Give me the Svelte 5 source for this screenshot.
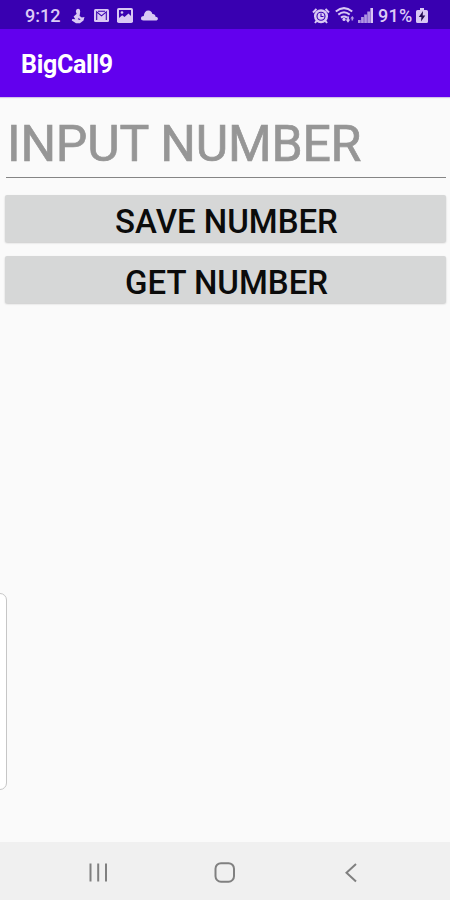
<script>
  let number = '';
  let saved = '';

  function saveNumber() {
    saved = number;
  }

  function getNumber() {
    number = saved;
  }
</script>

<div class="screen">
  <div class="status">
    <span class="clock">9:12</span>
    <svg class="touch" width="14" height="16" viewBox="0 0 14 16">
      <path d="M4.8 3Q5.5.6 7.3.7 9.4 1 9.2 3.5L8.6 8l2.2 1.5 2.7-.5-1 3.4-3.6 2.8H5L.8 12.6l.5-1.7 3 .4-1.7-2.7L5.5 6z" />
      <path class="cut thin" d="M2.8 5.5h2.4M7 10.8l2.2.7" />
    </svg>
    <svg class="mail" width="15" height="13" viewBox="0 0 15 13">
      <rect width="15" height="13" rx="1.5" />
      <path class="cut thin" d="M2.7 11V2.8l4.8 4 4.8-4V11M4 2.2h7" />
    </svg>
    <svg class="photo" width="16" height="15" viewBox="0 0 16 15">
      <rect width="16" height="15" rx="1.8" />
      <path class="hole" d="M2 2h12v6l-2.5-2.5L7.5 9 5.2 7.2 2 10z" />
      <circle cx="5" cy="4.5" r="1.3" />
    </svg>
    <svg class="cloud" width="17" height="11" viewBox="0 0 17 11">
      <path d="M2.5 10.5C.8 10.5 0 9.5 0 8.2 0 6.8 1.3 6 2.8 6 3 2.5 4.8.5 7.4.5c2.1 0 3.5 1.3 4 3.5 1.8-.2 3 .9 3.1 2.7 1.5.1 2.4.9 2.4 2 0 1.2-.9 1.8-2.2 1.8z" />
    </svg>
    <svg class="alarm" width="18" height="16" viewBox="0 0 18 16">
      <path class="line" d="M1 4.5 4.5 1M13.5 1 17 4.5M4.5 13 3 15M13.5 13l1.5 2" />
      <circle cx="9" cy="8.2" r="7" />
      <circle class="cut thin" cx="9" cy="8.2" r="4" />
      <path class="cut thin" d="M9 5.5v3h2.5" />
    </svg>
    <svg class="wifi" width="20" height="17" viewBox="0 0 20 17">
      <path class="line" d="M.8 4.5q8.2-6.7 16.4 0M3.3 7.6q5.7-4.6 11.4 0M6 10.6q3-2.3 6 0" />
      <circle cx="9" cy="12.4" r="1.6" />
      <path d="M12.2 9.5h1.7v3h1.4L13 15.8l-2.3-3.3h1.5z" />
      <path class="dim" d="m17.3 9 2 2.6h-1.2v2h-1.6v-2h-1.2z" />
    </svg>
    <svg class="signal" width="15" height="15" viewBox="0 0 15 15">
      <path class="dim" d="M0 12h2.7v3H0zM3.1 9h2.7v6H3.1zM6.2 6.5h2.7V15H6.2zM9.3 3.5H12V15H9.3z" />
      <path d="M12.4 0H15v15h-2.6z" />
    </svg>
    <span class="percent">91%</span>
    <svg class="battery" width="12" height="15" viewBox="0 0 12 15">
      <path d="M4 0h4v2h2.5Q12 2 12 3.5v10q0 1.5-1.5 1.5h-9Q0 15 0 13.5v-10Q0 2 1.5 2H4z" />
      <path class="bolt" d="M7 3 2.8 9h2.6L5 13.5l4.3-6H6.7z" />
    </svg>
  </div>

  <header><h1>BigCall9</h1></header>

  <main>
    <input bind:value={number} placeholder="INPUT NUMBER" aria-label="Number" />
    <button on:click={saveNumber}>SAVE NUMBER</button>
    <button on:click={getNumber}>GET NUMBER</button>
  </main>

  <div class="edge"></div>

  <nav>
    <svg width="20" height="20" viewBox="0 0 20 20">
      <path d="M2.5.5v18M10.2.5v18M18 .5v18" />
    </svg>
    <svg width="22" height="22" viewBox="0 0 22 22">
      <rect x="1.5" y="1.2" width="18.5" height="18.5" rx="5.5" />
    </svg>
    <svg width="20" height="20" viewBox="0 0 20 20">
      <path d="M15 1 5.5 9.7l9.5 8.8" />
    </svg>
  </nav>
</div>

<style>
  :global(body) {
    margin: 0;
    background: #fafafa;
  }

  .screen {
    position: relative;
    display: flex;
    flex-direction: column;
    height: 900px;
    overflow: hidden;
    font-family: Roboto, sans-serif;
    background: #fafafa;
  }

  .status {
    display: flex;
    align-items: center;
    box-sizing: border-box;
    height: 29px;
    padding: 2px 22px 0 25px;
    color: #dccbf6;
    background: #3900b1;
    font-size: 18px;
    font-weight: 500;
  }

  .status span {
    line-height: 27px;
    white-space: nowrap;
  }

  .status svg {
    flex: none;
    fill: #d9c8f4;
  }

  .status .line {
    fill: none;
    stroke: #d9c8f4;
    stroke-width: 2;
  }

  .status .cut {
    fill: none;
    stroke: #3900b1;
  }

  .status .thin {
    stroke-width: 1.1;
  }

  .status .hole {
    fill: #3900b1;
  }

  .status .dim {
    opacity: .75;
  }

  .status .bolt {
    fill: #220b52;
  }

  .clock {
    width: 46px;
  }

  .mail {
    margin-left: 9px;
  }

  .photo,
  .cloud {
    margin-left: 8px;
  }

  .alarm {
    margin-left: auto;
  }

  .wifi {
    margin-left: 5px;
  }

  .signal {
    margin-left: 3px;
  }

  .percent {
    width: 38px;
    margin-left: 5px;
    letter-spacing: .3px;
  }

  header {
    display: flex;
    align-items: center;
    box-sizing: border-box;
    height: 68px;
    padding: 3px 0 0 21px;
    background: #6200ee;
    box-shadow: 0 1px 1px #d3c4e8;
  }

  h1 {
    margin: 0;
    color: #fff;
    font-size: 25px;
    font-weight: 700;
    line-height: 32px;
    letter-spacing: -.3px;
  }

  main {
    display: flex;
    flex: 1;
    flex-direction: column;
    padding: 15px 4px 0 5px;
  }

  input {
    box-sizing: border-box;
    width: 440px;
    height: 66px;
    margin: 0 0 17px 1px;
    padding: 0 0 2px 1px;
    border: 0;
    border-bottom: 1px solid #858585;
    border-radius: 0;
    outline: 0;
    background: transparent;
    color: #222;
    font: 400 50px Roboto, sans-serif;
    letter-spacing: -.2px;
  }

  input::placeholder {
    color: #969696;
    opacity: 1;
    -webkit-text-stroke: .7px #969696;
  }

  button {
    height: 47px;
    margin: 0 0 14px;
    padding: 7px 0 0 2px;
    border: 0;
    border-radius: 2px;
    background: #d6d7d7;
    box-shadow: 0 1px 2px rgba(0, 0, 0, .2);
    color: #0b0b0b;
    font: 500 33px/40px Roboto, sans-serif;
  }

  .edge {
    position: absolute;
    top: 593px;
    left: -12px;
    box-sizing: border-box;
    width: 19px;
    height: 197px;
    border: 1px solid #c6c6c6;
    border-radius: 7px;
    background: #fff;
  }

  nav {
    display: flex;
    align-items: center;
    justify-content: space-between;
    box-sizing: border-box;
    height: 58px;
    padding: 3px 89px 0 88px;
    background: #f0f0f0;
  }

  nav svg {
    fill: none;
    stroke: #808080;
    stroke-width: 2;
  }
</style>
